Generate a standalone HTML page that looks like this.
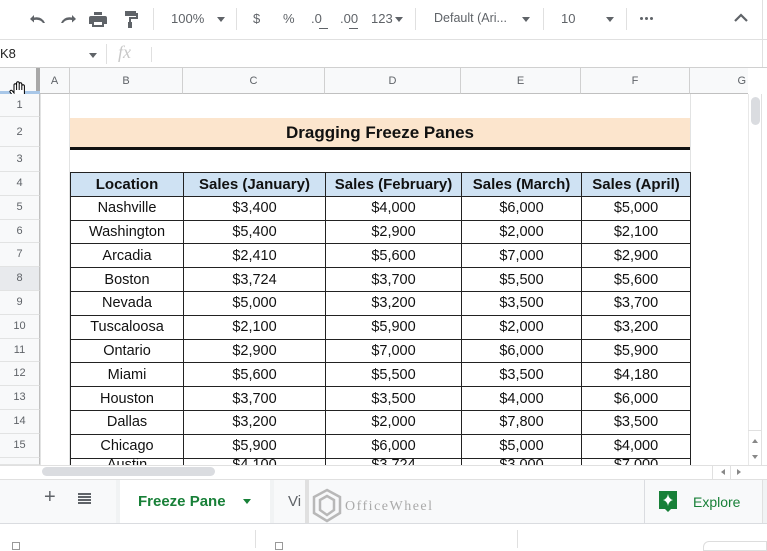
<!DOCTYPE html>
<html><head><meta charset="utf-8"><style>
*{margin:0;padding:0;box-sizing:border-box}
body{width:767px;height:548px;overflow:hidden;background:#fff;font-family:"Liberation Sans",Arial,sans-serif;position:relative}
.a{position:absolute}
.tb{color:#5f6368;font-size:13px}
.rh{position:absolute;left:0;width:40px;text-align:center;font-size:11px;color:#5f6368;border-bottom:1px solid #e2e3e3;background:#f8f9fa;border-right:1px solid #c0c0c0}
.ch{position:absolute;top:68px;height:26px;line-height:26px;text-align:center;font-size:11px;color:#5f6368;border-right:1px solid #d0d0d0;background:#f8f9fa;border-bottom:1px solid #c0c0c0}
.vl{position:absolute;width:1px;background:#e2e3e3}
table{position:absolute;left:70px;top:172px;border-collapse:collapse;font-size:14.5px;color:#111}
td{border:1px solid #222;text-align:center;height:23.8px;padding:0}
tr.h td{background:#cfe2f3;font-weight:bold;font-size:15px}
</style></head><body>
<div class="a" style="left:0;top:0;width:767px;height:40px;background:#fff;border-bottom:1px solid #e0e0e0"></div>
<svg class="a" style="left:28px;top:9px" width="120" height="20" viewBox="0 0 120 20" fill="#5f6368">
<path d="M2 10 L6 6 L6 8.5 Q14 7 17 14 L15 14 Q12 10 6 11 L6 13.5Z"/>
<path d="M48 10 L44 6 L44 8.5 Q36 7 33 14 L35 14 Q38 10 44 11 L44 13.5Z"/>
<path d="M66 3h8v3h-8z M63 7h14a2 2 0 0 1 2 2v6h-3v3h-12v-3h-3v-6a2 2 0 0 1 2-2z M66 13v3h8v-3z" />
<path d="M97 2h11v5h-11z M108 4h2v6h-7v3h-2v-5h7z M100 13h4v6h-4z"/>
</svg>
<div class="a tb" style="left:171px;top:11px;font-size:13px">100%</div>
<div class="a" style="left:217px;top:17px;border:4px solid transparent;border-top:5px solid #5f6368"></div>
<div class="a" style="left:236px;top:8px;width:1px;height:22px;background:#e0e0e0"></div>
<div class="a" style="left:153px;top:8px;width:1px;height:22px;background:#e0e0e0"></div>
<div class="a tb" style="left:253px;top:11px">$</div>
<div class="a tb" style="left:283px;top:11px">%</div>
<div class="a tb" style="left:311px;top:11px">.0</div>
<div class="a tb" style="left:340px;top:11px">.00</div>
<div class="a" style="left:319px;top:28px;width:9px;height:1px;background:#5f6368"></div>
<div class="a" style="left:349px;top:28px;width:9px;height:1px;background:#5f6368"></div>
<div class="a tb" style="left:371px;top:11px">123</div>
<div class="a" style="left:395px;top:17px;border:4px solid transparent;border-top:5px solid #5f6368"></div>
<div class="a" style="left:415px;top:8px;width:1px;height:22px;background:#e0e0e0"></div>
<div class="a tb" style="left:434px;top:11px;font-size:12.5px">Default (Ari...</div>
<div class="a" style="left:522px;top:17px;border:4px solid transparent;border-top:5px solid #5f6368"></div>
<div class="a" style="left:543px;top:8px;width:1px;height:22px;background:#e0e0e0"></div>
<div class="a tb" style="left:561px;top:11px">10</div>
<div class="a" style="left:606px;top:17px;border:4px solid transparent;border-top:5px solid #5f6368"></div>
<div class="a" style="left:626px;top:8px;width:1px;height:22px;background:#e0e0e0"></div>
<div class="a" style="left:640px;top:17px;width:3px;height:3px;background:#5f6368;border-radius:50%;box-shadow:5px 0 0 #5f6368,10px 0 0 #5f6368"></div>
<svg class="a" style="left:733px;top:12px" width="16" height="12"><path d="M2 9 L8 3 L14 9" stroke="#5f6368" stroke-width="2.2" fill="none"/></svg>
<div class="a" style="left:762px;top:0;width:1px;height:68px;background:#e0e0e0"></div>
<div class="a" style="left:0;top:40px;width:767px;height:28px;border-bottom:1px solid #d0d0d0"></div>
<div class="a" style="left:0;top:46px;font-size:13px;color:#222">K8</div>
<div class="a" style="left:89px;top:53px;border:4px solid transparent;border-top:5px solid #5f6368"></div>
<div class="a" style="left:106px;top:44px;width:1px;height:20px;background:#e0e0e0"></div>
<div class="a" style="left:118px;top:42px;font-size:18px;font-style:italic;color:#c8c8c8;font-family:'Liberation Serif',serif">fx</div>
<div class="a" style="left:151px;top:47px;width:1px;height:15px;background:#e0e0e0"></div>
<div class="ch" style="left:0;width:40px;border-right:4px solid #a8a8a8"></div>
<div class="ch" style="left:40px;width:30px">A</div>
<div class="ch" style="left:70px;width:113px">B</div>
<div class="ch" style="left:183px;width:142px">C</div>
<div class="ch" style="left:325px;width:136px">D</div>
<div class="ch" style="left:461px;width:120px">E</div>
<div class="ch" style="left:581px;width:109px">F</div>
<div class="ch" style="left:690px;width:58px;text-align:right;padding-right:2px;border-right:none">G</div>
<div class="a" style="left:0;top:91px;width:40px;height:3px;background:#a8c7e8"></div>
<svg class="a" style="left:8px;top:79px" width="22" height="22" viewBox="0 0 22 22"><path d="M6 14 V6 a1.3 1.3 0 0 1 2.6 0 V11 V4 a1.3 1.3 0 0 1 2.6 0 V11 V5 a1.3 1.3 0 0 1 2.6 0 V11 V7 a1.3 1.3 0 0 1 2.6 0 V15 Q16 20 11 20 Q7 20 5 17 L2 13 a1.3 1.3 0 0 1 2 -1.5Z" fill="#fff" stroke="#000" stroke-width="1"/></svg>
<div class="vl" style="left:69px;top:94px;height:371px"></div>
<div class="vl" style="left:40px;top:94px;height:371px"></div>
<div class="vl" style="left:690px;top:94px;height:371px"></div>
<div class="rh" style="top:94px;height:23px;line-height:23px">1</div>
<div class="rh" style="top:117px;height:30px;line-height:30px">2</div>
<div class="rh" style="top:147px;height:25px;line-height:25px">3</div>
<div class="rh" style="top:172px;height:23.8px;line-height:23.8px">4</div>
<div class="rh" style="top:195.8px;height:23.8px;line-height:23.8px">5</div>
<div class="rh" style="top:219.6px;height:23.8px;line-height:23.8px">6</div>
<div class="rh" style="top:243.4px;height:23.8px;line-height:23.8px">7</div>
<div class="rh" style="top:267.2px;height:23.8px;line-height:23.8px;background:#e8eaed">8</div>
<div class="rh" style="top:291px;height:23.8px;line-height:23.8px">9</div>
<div class="rh" style="top:314.8px;height:23.8px;line-height:23.8px">10</div>
<div class="rh" style="top:338.6px;height:23.8px;line-height:23.8px">11</div>
<div class="rh" style="top:362.4px;height:23.8px;line-height:23.8px">12</div>
<div class="rh" style="top:386.2px;height:23.8px;line-height:23.8px">13</div>
<div class="rh" style="top:410px;height:23.8px;line-height:23.8px">14</div>
<div class="rh" style="top:433.8px;height:23.8px;line-height:23.8px">15</div>
<div class="rh" style="top:457.6px;height:7.4px;line-height:23.8px;overflow:hidden">16</div>
<div class="a" style="left:70px;top:118px;width:620px;height:29px;background:#fce5cd;text-align:center;line-height:29px;font-weight:bold;font-size:17px;color:#111">Dragging Freeze Panes</div>
<div class="a" style="left:70px;top:147px;width:620px;height:3px;background:#111"></div>
<div class="a" style="left:0;top:172px;width:748px;height:293px;overflow:hidden">
<table style="left:70px;top:0">
<colgroup><col style="width:113px"><col style="width:142px"><col style="width:136px"><col style="width:120px"><col style="width:109px"></colgroup>
<tr class="h"><td>Location</td><td>Sales (January)</td><td>Sales (February)</td><td>Sales (March)</td><td>Sales (April)</td></tr>
<tr><td>Nashville</td><td>$3,400</td><td>$4,000</td><td>$6,000</td><td>$5,000</td></tr>
<tr><td>Washington</td><td>$5,400</td><td>$2,900</td><td>$2,000</td><td>$2,100</td></tr>
<tr><td>Arcadia</td><td>$2,410</td><td>$5,600</td><td>$7,000</td><td>$2,900</td></tr>
<tr><td>Boston</td><td>$3,724</td><td>$3,700</td><td>$5,500</td><td>$5,600</td></tr>
<tr><td>Nevada</td><td>$5,000</td><td>$3,200</td><td>$3,500</td><td>$3,700</td></tr>
<tr><td>Tuscaloosa</td><td>$2,100</td><td>$5,900</td><td>$2,000</td><td>$3,200</td></tr>
<tr><td>Ontario</td><td>$2,900</td><td>$7,000</td><td>$6,000</td><td>$5,900</td></tr>
<tr><td>Miami</td><td>$5,600</td><td>$5,500</td><td>$3,500</td><td>$4,180</td></tr>
<tr><td>Houston</td><td>$3,700</td><td>$3,500</td><td>$4,000</td><td>$6,000</td></tr>
<tr><td>Dallas</td><td>$3,200</td><td>$2,000</td><td>$7,800</td><td>$3,500</td></tr>
<tr><td>Chicago</td><td>$5,900</td><td>$6,000</td><td>$5,000</td><td>$4,000</td></tr>
<tr><td style="vertical-align:top;line-height:12px">Austin</td><td style="vertical-align:top;line-height:12px">$4,100</td><td style="vertical-align:top;line-height:12px">$3,724</td><td style="vertical-align:top;line-height:12px">$3,000</td><td style="vertical-align:top;line-height:12px">$7,000</td></tr>
</table></div>
<div class="a" style="left:748px;top:94px;width:14px;height:371px;background:#fff;border-left:1px solid #e8e8e8;border-right:1px solid #e0e0e0"></div>
<div class="a" style="left:751px;top:97px;width:9px;height:28px;border-radius:5px;background:#dadce0"></div>
<div class="a" style="left:748px;top:430px;width:14px;height:35px;border-top:1px solid #e0e0e0"></div>
<div class="a" style="left:752px;top:436px;border:3px solid transparent;border-bottom:4px solid #888"></div>
<div class="a" style="left:752px;top:455px;border:3px solid transparent;border-top:4px solid #888"></div>
<div class="a" style="left:0;top:465px;width:767px;height:14px;background:#fff;border-top:1px solid #e0e0e0"></div>
<div class="a" style="left:42px;top:467px;width:173px;height:9px;border-radius:5px;background:#dadce0"></div>
<div class="a" style="left:712px;top:465px;width:1px;height:14px;background:#e0e0e0"></div>
<div class="a" style="left:730px;top:465px;width:1px;height:14px;background:#e0e0e0"></div>
<div class="a" style="left:718px;top:469px;border:3px solid transparent;border-right:4px solid #888"></div>
<div class="a" style="left:737px;top:469px;border:3px solid transparent;border-left:4px solid #888"></div>
<div class="a" style="left:0;top:479px;width:767px;height:45px;background:#f1f3f4;border-top:1px solid #e0e0e0;border-bottom:1px solid #dadce0"></div>
<div class="a" style="left:0;top:480px;width:116px;height:43px;background:#f8f9fa"></div>
<div class="a" style="left:44px;top:486px;font-size:20px;color:#5f6368">+</div>
<div class="a" style="left:78px;top:493px;width:13px;height:2px;background:#5f6368;box-shadow:0 3px 0 #5f6368,0 6px 0 #5f6368,0 9px 0 #5f6368"></div>
<div class="a" style="left:120px;top:480px;width:150px;height:43px;background:#fff"></div>
<div class="a" style="left:138px;top:493px;font-size:15px;color:#188038;font-weight:bold">Freeze Pane</div>
<div class="a" style="left:243px;top:499px;border:4px solid transparent;border-top:5px solid #188038"></div>
<div class="a" style="left:274px;top:480px;width:370px;height:43px;background:#f8f9fa"></div>
<div class="a" style="left:288px;top:493px;font-size:15px;color:#5f6368">Vi</div>
<div class="a" style="left:305px;top:480px;width:4px;height:43px;background:#e0e0e0"></div>
<svg class="a" style="left:312px;top:488px" width="30" height="36" viewBox="0 0 30 36"><path d="M15 2 L28 9 V25 L15 33 L2 25 V9Z M15 8 L22 12 V22 L15 27 L8 22 V12Z" fill="none" stroke="#b8b8b8" stroke-width="2.5"/></svg>
<div class="a" style="left:345px;top:499px;font-size:14px;color:#aaa;letter-spacing:1.5px;font-family:'Liberation Serif',serif">OfficeWheel</div>
<div class="a" style="left:644px;top:480px;width:1px;height:43px;background:#dadce0"></div>
<div class="a" style="left:645px;top:480px;width:117px;height:43px;background:#f8f9fa"></div>
<svg class="a" style="left:657px;top:490px" width="22" height="24" viewBox="0 0 22 24"><path d="M2 1h18v18h-6l-3 3-3-3H2z" fill="#188038"/><path d="M11 4 Q11.8 9 16 10 Q11.8 11 11 16 Q10.2 11 6 10 Q10.2 9 11 4Z" fill="#fff"/></svg>
<div class="a" style="left:693px;top:494px;font-size:14px;color:#188038">Explore</div>
<div class="a" style="left:762px;top:480px;width:1px;height:43px;background:#e0e0e0"></div>
<div class="a" style="left:0;top:524px;width:767px;height:24px;background:#fff"></div>
<div class="a" style="left:255px;top:530px;width:1px;height:18px;background:#e0e0e0"></div>
<div class="a" style="left:517px;top:530px;width:1px;height:18px;background:#e0e0e0"></div>
<div class="a" style="left:12px;top:542px;width:8px;height:8px;border:1px solid #999"></div>
<div class="a" style="left:275px;top:542px;width:8px;height:8px;border:1px solid #999"></div>
<div class="a" style="left:703px;top:541px;width:64px;height:10px;border:1px solid #ddd;border-radius:6px 0 0 0"></div>
</body></html>
